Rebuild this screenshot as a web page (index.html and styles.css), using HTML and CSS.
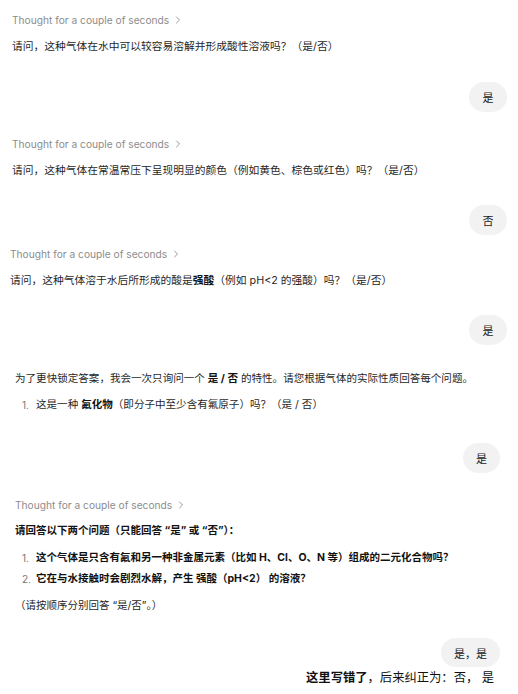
FILE: index.html
```html
<!DOCTYPE html>
<html lang="zh-CN">
<head>
<meta charset="utf-8">
<title>Chat</title>
<link rel="stylesheet" href="styles.css">
</head>
<body>
<main class="chat">

  <section class="turn t1">
    <div class="thought">Thought for a couple of seconds
      <svg class="chev" width="6" height="8" viewBox="0 0 6 8"><path d="M1.5 1 L4.5 4 L1.5 7" fill="none" stroke="currentColor" stroke-width="1" stroke-linecap="round" stroke-linejoin="round"/></svg>
    </div>
    <p class="msg">请问，这种气体在水中可以较容易溶解并形成酸性溶液吗？（是/否）</p>
    <div class="user"><span class="bubble">是</span></div>
  </section>

  <section class="turn t2">
    <div class="thought">Thought for a couple of seconds
      <svg class="chev" width="6" height="8" viewBox="0 0 6 8"><path d="M1.5 1 L4.5 4 L1.5 7" fill="none" stroke="currentColor" stroke-width="1" stroke-linecap="round" stroke-linejoin="round"/></svg>
    </div>
    <p class="msg">请问，这种气体在常温常压下呈现明显的颜色（例如黄色、棕色或红色）吗？（是/否）</p>
    <div class="user"><span class="bubble">否</span></div>
  </section>

  <section class="turn t3">
    <div class="thought">Thought for a couple of seconds
      <svg class="chev" width="6" height="8" viewBox="0 0 6 8"><path d="M1.5 1 L4.5 4 L1.5 7" fill="none" stroke="currentColor" stroke-width="1" stroke-linecap="round" stroke-linejoin="round"/></svg>
    </div>
    <p class="msg">请问，这种气体溶于水后所形成的酸是<b>强酸</b>（例如 pH&lt;2 的强酸）吗？（是/否）</p>
    <div class="user"><span class="bubble">是</span></div>
  </section>

  <section class="turn t4">
    <p class="msg">为了更快锁定答案，我会一次只询问一个 <b>是 / 否</b> 的特性。请您根据气体的实际性质回答每个问题。</p>
    <ol class="list">
      <li class="item"><span class="num">1.</span><span>这是一种 <b>氟化物</b>（即分子中至少含有氟原子）吗？（是 / 否）</span></li>
    </ol>
    <div class="user"><span class="bubble">是</span></div>
  </section>

  <section class="turn t5">
    <div class="thought">Thought for a couple of seconds
      <svg class="chev" width="6" height="8" viewBox="0 0 6 8"><path d="M1.5 1 L4.5 4 L1.5 7" fill="none" stroke="currentColor" stroke-width="1" stroke-linecap="round" stroke-linejoin="round"/></svg>
    </div>
    <p class="msg"><b>请回答以下两个问题（只能回答 “是” 或 “否”）：</b></p>
    <ol class="list">
      <li class="item"><span class="num">1.</span><b>这个气体是只含有氟和另一种非金属元素（比如 H、Cl、O、N 等）组成的二元化合物吗？</b></li>
      <li class="item"><span class="num">2.</span><b>它在与水接触时会剧烈水解，产生 强酸（pH&lt;2） 的溶液？</b></li>
    </ol>
    <p class="msg note">（请按顺序分别回答 “是/否”。）</p>
    <div class="user"><span class="bubble">是，是</span></div>
    <p class="correction"><b>这里写错了</b>，后来纠正为：否， 是</p>
  </section>

</main>
</body>
</html>
```

FILE: styles.css
```css
* { box-sizing: border-box; }

html, body {
  margin: 0;
  padding: 0;
  background: #ffffff;
}

body {
  width: 518px;
  height: 694px;
  overflow: hidden;
  font-family: "Inter", "Noto Sans CJK SC", sans-serif;
  color: #1f1f1f;
  font-size: 11px;
}

.chat {
  display: flex;
  flex-direction: column;
  padding-top: 12px;
}

.turn {
  display: flex;
  flex-direction: column;
}

.thought {
  display: flex;
  align-items: center;
  gap: 5px;
  height: 16px;
  line-height: 16px;
  font-size: 10.2px;
  color: #8c8c8c;
}

.chev { color: #9a9a9a; margin-left: 1px; }

.msg {
  margin: 0;
  line-height: 16px;
  font-size: 10.75px;
}

.msg b, .item b, .correction b { font-weight: 700; color: #111; }

.user {
  display: flex;
  justify-content: flex-end;
}

.bubble {
  display: inline-flex;
  align-items: center;
  justify-content: center;
  height: 30px;
  min-width: 38px;
  padding: 0 13px;
  border-radius: 15px;
  background: #f2f2f2;
  color: #1a1a1a;
  font-size: 11px;
}

.list {
  list-style: none;
  margin: 0;
  padding: 0 0 0 7px;
  display: flex;
  flex-direction: column;
  gap: 5px;
}

.item {
  display: flex;
  line-height: 16px;
  font-size: 10.75px;
}

.num {
  width: 14px;
  flex: none;
  color: #777;
  font-family: "Inter", sans-serif;
  font-size: 10px;
}

/* turn 1 */
.t1 { padding-left: 12px; padding-right: 11px; }
.t1 .msg { margin-top: 11px; }
.t1 .user { margin-top: 27px; }

/* turn 2 */
.t2 { padding-left: 12px; padding-right: 11px; margin-top: 24px; }
.t2 .msg { margin-top: 11px; }
.t2 .user { margin-top: 26px; }

/* turn 3 */
.t3 { padding-left: 10px; padding-right: 11px; margin-top: 11px; }
.t3 .msg { margin-top: 11px; }
.t3 .user { margin-top: 26px; }

/* turn 4 */
.t4 { padding-left: 15px; padding-right: 18px; margin-top: 26px; }
.t4 .msg { font-size: 10.55px; }
.t4 .item { font-size: 10.55px; }
.t4 .list { margin-top: 10px; }
.t4 .user { margin-top: 30px; }
.t4 .bubble { min-width: 37px; }

/* turn 5 */
.t5 { padding-left: 15px; padding-right: 18px; margin-top: 24px; }
.t5 > .msg { margin-top: 10px; font-size: 10.5px; }
.t5 .item { font-size: 10.5px; }
.t5 .list { margin-top: 11px; }
.t5 .note { margin-top: 11px; font-size: 10.5px; }
.t5 .user { margin-top: 24px; }
.t5 .bubble { height: 29px; }

.correction {
  margin: 3px 6px 0 0;
  text-align: right;
  line-height: 16px;
  font-size: 12.3px;
  color: #111;
}
```
